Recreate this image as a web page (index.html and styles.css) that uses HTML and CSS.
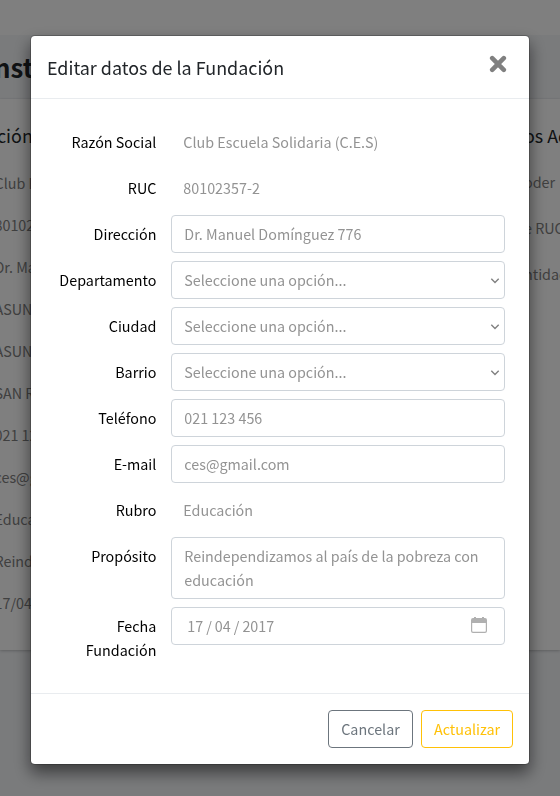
FILE: index.html
```html
<!DOCTYPE html>
<html lang="es">
<head>
<meta charset="utf-8">
<title>Editar datos de la Fundación</title>
<link rel="stylesheet" href="styles.css">
</head>
<body>
<div class="page">
  <div class="navbar"></div>
  <h1 class="page-title">nst</h1>
  <div class="card">
    <div class="card-main">
      <h2>ción</h2>
      <p>Club E</p><p>80102</p><p>Dr. Ma</p><p>ASUN</p><p>ASUN</p><p>SAN R</p><p>021 12</p><p>ces@g</p><p>Educa</p><p>Reind</p><p>17/04</p>
    </div>
    <div class="card-side">
      <h2>os Ad</h2>
      <p>oder</p><p>e RUC</p><p>ntidad</p>
    </div>
  </div>
</div>
<div class="backdrop">
  <div class="modal">
    <header class="modal-header">
      <h5>Editar datos de la Fundación</h5>
      <button class="close" aria-label="Cerrar"><svg width="18" height="18" viewBox="0 0 18 18"><path d="M3.2 3.2 14.8 14.8M14.8 3.2 3.2 14.8" fill="none" stroke="#808080" stroke-width="4.6" stroke-linecap="round"/></svg></button>
    </header>
    <form class="modal-body">
      <div class="row"><label>Razón Social</label><span class="plain">Club Escuela Solidaria (C.E.S)</span></div>
      <div class="row"><label>RUC</label><span class="plain">80102357-2</span></div>
      <div class="row"><label>Dirección</label><div class="control">Dr. Manuel Domínguez 776</div></div>
      <div class="row"><label>Departamento</label><div class="control select">Seleccione una opción...<svg width="10" height="8" viewBox="0 0 10 8"><path d="M1.3 1.8 5 5.5 8.7 1.8" fill="none" stroke="#808080" stroke-width="1.4"/></svg></div></div>
      <div class="row"><label>Ciudad</label><div class="control select">Seleccione una opción...<svg width="10" height="8" viewBox="0 0 10 8"><path d="M1.3 1.8 5 5.5 8.7 1.8" fill="none" stroke="#808080" stroke-width="1.4"/></svg></div></div>
      <div class="row"><label>Barrio</label><div class="control select">Seleccione una opción...<svg width="10" height="8" viewBox="0 0 10 8"><path d="M1.3 1.8 5 5.5 8.7 1.8" fill="none" stroke="#808080" stroke-width="1.4"/></svg></div></div>
      <div class="row"><label>Teléfono</label><div class="control">021 123 456</div></div>
      <div class="row"><label>E-mail</label><div class="control">ces@gmail.com</div></div>
      <div class="row"><label>Rubro</label><span class="plain">Educación</span></div>
      <div class="row"><label>Propósito</label><div class="control area">Reindependizamos al país de la pobreza con<br>educación</div></div>
      <div class="row"><label>Fecha<br>Fundación</label><div class="control date">17 / 04 / 2017<svg width="16" height="16" viewBox="0 0 16 16"><path d="M2 1h12a2 2 0 0 1 2 2v11a2 2 0 0 1-2 2H2a2 2 0 0 1-2-2V3a2 2 0 0 1 2-2ZM1.200 6v8a.8.8 0 0 0 .8.8h12a.8.8 0 0 0 .8-.8V6Z" fill="#b0b0b0" fill-rule="evenodd"/><path d="M3 0h2v2H3zM11 0h2v2h-2z" fill="#b0b0b0"/></svg></div></div>
    </form>
    <footer class="modal-footer">
      <button class="btn cancel" type="button">Cancelar</button>
      <button class="btn update" type="button">Actualizar</button>
    </footer>
  </div>
</div>
</body>
</html>
```
FILE: styles.css
```css
* { box-sizing: border-box; }
body {
  margin: 0;
  height: 796px;
  overflow: hidden;
  background: #f4f6f9;
  color: #212529;
  font: 14.34px/24px "Noto Sans CJK SC", "Noto Sans", sans-serif;
}
h1, h2, h5, p { margin: 0; white-space: nowrap; }
.page { height: 796px; overflow: hidden; }
.navbar { height: 35px; background: #fff; }
.page-title { height: 64px; padding-top: 15px; margin-left: -6px; font-size: 25.8px; line-height: 34px; font-weight: 700; }
.card {
  display: flex;
  justify-content: space-between;
  height: 551px;
  padding-top: 24px;
  background: #fff;
  box-shadow: 0 0 1px rgba(0,0,0,.125), 0 1px 3px rgba(0,0,0,.2);
}
.card h2 { font-size: 17.9px; line-height: 24px; font-weight: 400; }
.card p { color: #808080; }
.card-main { width: 60px; margin-left: -5.5px; }
.card-main h2 { padding-left: 2.5px; margin-bottom: 24px; }
.card-main p { margin-bottom: 18px; }
.card-side { width: 36px; }
.card-side h2 { margin-bottom: 23px; }
.card-side p { margin-bottom: 22px; }
.backdrop {
  position: fixed;
  inset: 0;
  padding-top: 35px;
  background: rgba(0,0,0,.5);
}
.modal {
  width: 500px;
  height: 730px;
  margin: 0 auto;
  display: flex;
  flex-direction: column;
  background: #fff;
  background-clip: padding-box;
  border: 1px solid rgba(0,0,0,.2);
  border-radius: 4.8px;
  box-shadow: 0 8px 16px rgba(0,0,0,.5);
}
.modal-header {
  height: 63px;
  padding: 16px;
  display: flex;
  justify-content: space-between;
  border-bottom: 1px solid #e9ecef;
}
.modal-header h5 { font-size: 17.93px; line-height: 30px; font-weight: 400; }
.close { width: 18px; height: 18px; margin: 3px 6px 0 0; padding: 0; border: 0; background: none; }
.close svg { display: block; }
.modal-body {
  flex: 1;
  padding: 24px 24px 0;
  display: flex;
  flex-direction: column;
  gap: 8px;
}
.row { display: grid; grid-template-columns: 101px 334px; column-gap: 15px; align-items: start; }
label { padding-top: 7px; margin-right: -.4px; text-align: right; color: #000; }
.plain { height: 38px; padding: 7px 12.3px; color: #939393; }
.control {
  height: 38px;
  padding: 6px 12.3px;
  color: #939393;
  border: 1px solid #ced4da;
  border-radius: 4px;
  white-space: nowrap;
}
.select, .date { display: flex; justify-content: space-between; align-items: center; }
.select { padding-right: 4px; }
.select svg { margin-top: 2px; }
.date { padding: 6px 17px 6px 15.3px; word-spacing: -.2px; }
.date svg { margin-top: -2px; }
.area { height: 62px; }
.modal-footer {
  height: 71px;
  padding: 16px 16px 0;
  display: flex;
  justify-content: flex-end;
  gap: 8px;
  border-top: 1px solid #e9ecef;
}
.btn { height: 38px; padding: 0; font: inherit; background: none; border: 1px solid; border-radius: 4px; }
.cancel { width: 85px; color: #6c757d; }
.update { width: 92px; color: #ffc107; }
```
